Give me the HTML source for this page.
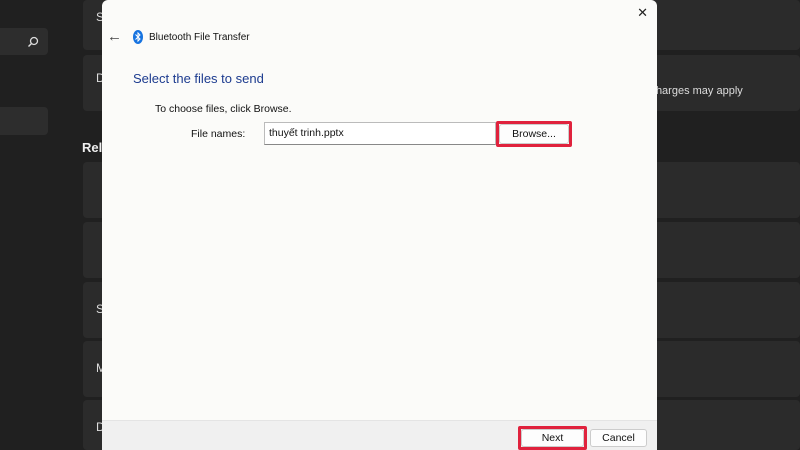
<!DOCTYPE html>
<html><head><style>
*{margin:0;padding:0;box-sizing:border-box}
body{width:800px;height:450px;background:#202020;position:relative;overflow:hidden;font-family:"Liberation Sans",sans-serif}
.c{position:absolute;left:83px;right:0;background:#2b2b2b;border-radius:4px;color:#ddd;font-size:12px}
.dlg{position:absolute;left:102px;top:0;width:555px;height:450px;background:#fbfbf9;border-radius:6px 6px 0 0}
.t{position:absolute;font-size:10.5px;color:#111}
.btn{position:absolute;background:#fdfdfd;border:1px solid #ccc;border-radius:3px;font-size:10.5px;text-align:center;color:#111}
.red{position:absolute;border:3px solid #e0223d;border-radius:2px}
</style></head><body>
<div style="position:absolute;left:0;top:28px;width:48px;height:27px;background:#2d2d2d;border-radius:0 4px 4px 0"></div>
<svg style="position:absolute;left:27px;top:36px" width="12" height="12" viewBox="0 0 12 12"><circle cx="7" cy="5" r="3.5" stroke="#ddd" stroke-width="1.3" fill="none"/><path d="M4.5 7.5 1.5 10.5" stroke="#ddd" stroke-width="1.4"/></svg>
<div style="position:absolute;left:0;top:107px;width:48px;height:28px;background:#2d2d2d;border-radius:0 4px 4px 0"></div>
<div class="c" style="top:0;height:50px"><span style="position:absolute;left:13px;top:10px">S</span></div>
<div class="c" style="top:55px;height:56px"><span style="position:absolute;left:13px;top:16px">D</span><span style="position:absolute;left:565px;top:30px;font-size:11px">Charges may apply</span></div>
<div style="position:absolute;left:82px;top:140px;color:#eee;font-weight:bold;font-size:13px">Related</div>
<div class="c" style="top:162px;height:56px"></div>
<div class="c" style="top:222px;height:56px"></div>
<div class="c" style="top:282px;height:56px"><span style="position:absolute;left:13px;top:20px">S</span></div>
<div class="c" style="top:341px;height:56px"><span style="position:absolute;left:13px;top:20px">M</span></div>
<div class="c" style="top:400px;height:50px"><span style="position:absolute;left:13px;top:20px">D</span></div>
<div class="dlg">
<div style="position:absolute;right:9px;top:5px;font-size:13px;color:#222">✕</div>
<div style="position:absolute;left:5px;top:28px;font-size:15px;color:#444">←</div>
<svg style="position:absolute;left:31px;top:30px" width="10" height="14" viewBox="0 0 10 14"><ellipse cx="5" cy="7" rx="5" ry="7" fill="#1673e0"/><path d="M2.5 4.5 7 9 5 11V3L7 5 2.5 9.5" stroke="#fff" stroke-width="1" fill="none"/></svg>
<div class="t" style="left:47px;top:32px;font-size:10px">Bluetooth File Transfer</div>
<div style="position:absolute;left:31px;top:71px;font-size:13px;color:#1c3b8f">Select the files to send</div>
<div class="t" style="left:53px;top:103px">To choose files, click Browse.</div>
<div class="t" style="left:89px;top:128px">File names:</div>
<div style="position:absolute;left:162px;top:122px;width:232px;height:23px;border:1px solid #bbb;border-bottom-color:#888;background:#fff;font-size:10.5px;padding:4px 4px;color:#111">thuyết trinh.pptx</div>
<div class="btn" style="left:397px;top:124px;width:70px;height:20px;line-height:18px">Browse...</div>
<div class="red" style="left:394px;top:121px;width:76px;height:26px"></div>
<div style="position:absolute;left:0;bottom:0;width:555px;height:30px;background:#f0f0f0;border-top:1px solid #e4e4e4"></div>
<div class="btn" style="left:419px;top:429px;width:63px;height:18px;line-height:16px">Next</div>
<div class="red" style="left:416px;top:426px;width:69px;height:24px"></div>
<div class="btn" style="left:488px;top:429px;width:57px;height:18px;line-height:16px">Cancel</div>
</div>
</body></html>
